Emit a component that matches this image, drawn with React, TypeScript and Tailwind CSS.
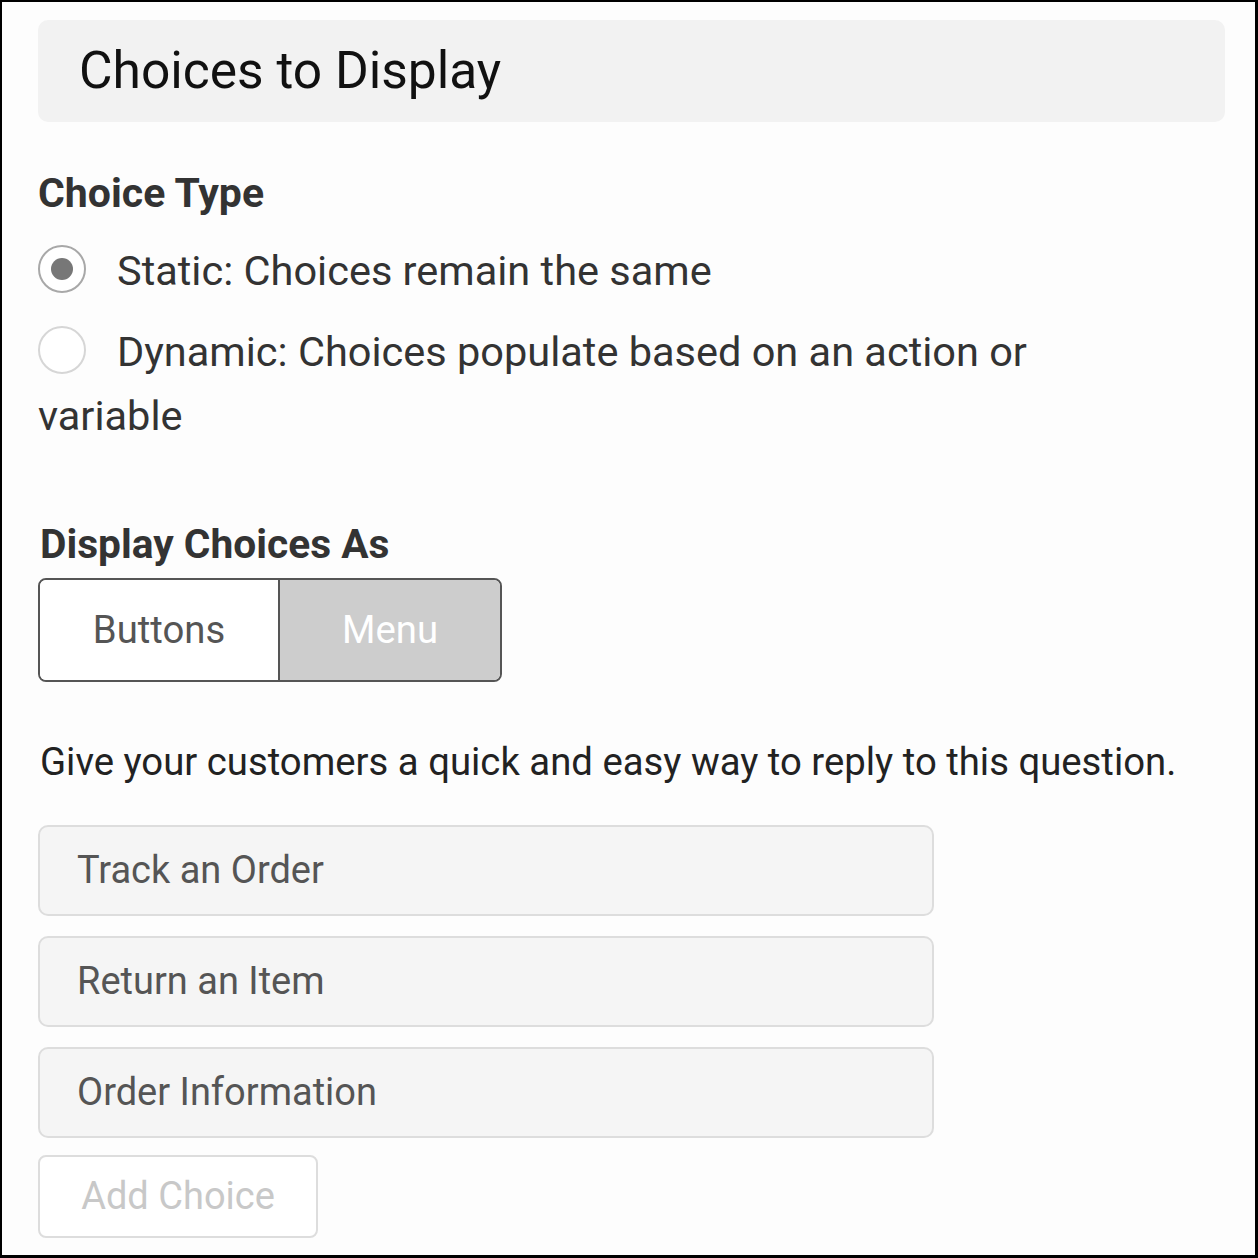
import React from "react";

const font = { fontFamily: "Roboto, 'Liberation Sans', sans-serif" };

function Radio({ checked }: { checked?: boolean }) {
  return (
    <span
      className={
        "relative inline-block w-[48px] h-[48px] rounded-full border-2 bg-white align-[-8px] mr-[31px] " +
        (checked ? "border-[#a8a8a8]" : "border-[#d6d6d6]")
      }
    >
      {checked && (
        <span className="absolute left-[11px] top-[11px] w-[22px] h-[22px] rounded-full bg-[#777777]" />
      )}
    </span>
  );
}

export default function App() {
  const choices = ["Track an Order", "Return an Item", "Order Information"];
  return (
    <div
      style={font}
      className="w-[1258px] h-[1258px] border-t-[2px] border-l-[2px] border-r-[3px] border-b-[3px] border-black bg-[#fdfdfd] pl-[36px] pr-[30px] overflow-hidden"
    >
      <div className="mt-[18px] h-[102px] rounded-[10px] bg-[#f2f2f2] flex items-center pl-[41px] text-[51.5px] text-[#111111]">
        Choices to Display
      </div>

      <div className="mt-[47px] text-[41px] leading-[48px] font-bold text-[#333333]">Choice Type</div>

      <div className="mt-[22px] text-[41.5px] leading-[64px] text-[#333333] whitespace-nowrap">
        <Radio checked />
        Static: Choices remain the same
      </div>
      <div className="mt-[17px] text-[41.5px] leading-[64px] text-[#333333] whitespace-nowrap">
        <Radio />
        Dynamic: Choices populate based on an action or
        <br />
        variable
      </div>

      <div className="mt-[72px] text-[40.7px] leading-[48px] font-bold text-[#333333] pl-[2px]">Display Choices As</div>

      <div className="mt-[10px] flex w-[464px] h-[104px] rounded-[8px] border-2 border-[#555555] overflow-hidden text-[38.3px]">
        <div className="w-[240px] flex items-center justify-center bg-white text-[#555555] border-r-2 border-[#555555]">
          Buttons
        </div>
        <div className="flex-1 flex items-center justify-center bg-[#cdcdcd] text-white">Menu</div>
      </div>

      <div className="mt-[52px] text-[38.3px] leading-[56px] text-[#222222] pl-[2px] whitespace-nowrap">
        Give your customers a quick and easy way to reply to this question.
      </div>

      <div className="mt-[35px] flex flex-col gap-[20px]">
        {choices.map((c) => (
          <div
            key={c}
            className="w-[896px] h-[91px] rounded-[10px] border-2 border-[#dddddd] bg-[#f5f5f5] flex items-center pl-[37px] text-[38px] text-[#555555]"
          >
            {c}
          </div>
        ))}
      </div>

      <div className="mt-[17px] w-[280px] h-[83px] rounded-[8px] border-2 border-[#dddddd] bg-white flex items-center justify-center text-[38px] text-[#c8c8c8]">
        Add Choice
      </div>
    </div>
  );
}
